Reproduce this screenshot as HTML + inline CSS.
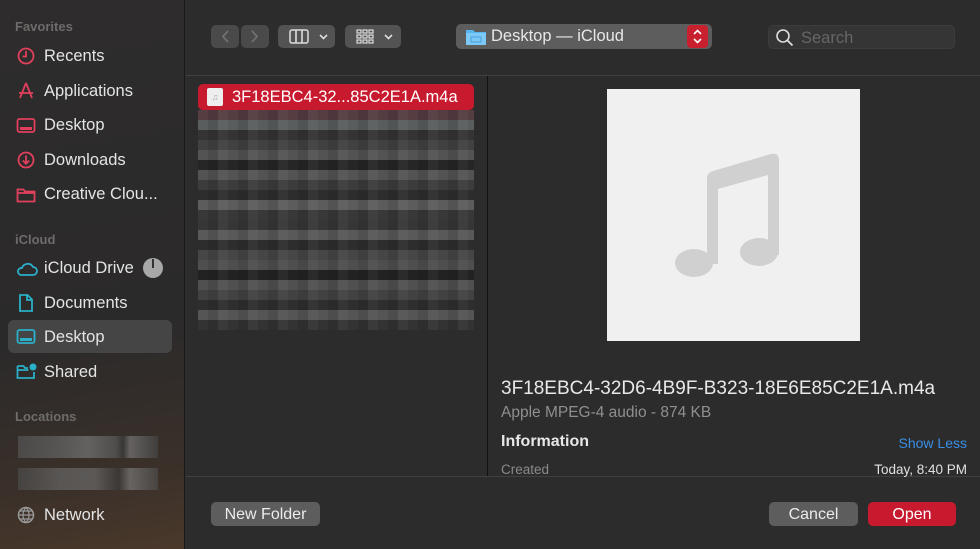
<!DOCTYPE html>
<html><head><style>
*{margin:0;padding:0;box-sizing:border-box}
body{width:980px;height:549px;overflow:hidden;background:#2c2c2c;font-family:"Liberation Sans",sans-serif;position:relative;color:#e0e0e0}
.sb{position:absolute;left:0;top:0;width:185px;height:549px;background:linear-gradient(170deg,#2e2c2c 0%,#2b2a2a 60%,#3a3029 85%,#4a382b 100%);border-right:1px solid #1a1a1a}
.h{position:absolute;left:15px;font-size:13px;color:#6e6c6b;font-weight:bold}
.it{position:absolute;left:44px;font-size:16.5px;color:#e4e4e4}
.ic{position:absolute;left:16px}
.abs{position:absolute}
.btn{position:absolute;background:#535353;border-radius:5px}
</style></head><body>
<div class="sb">
<div class="h" style="top:19px">Favorites</div>
<svg class="ic" style="top:46px" width="20" height="20" viewBox="0 0 20 20"><circle cx="10" cy="10" r="7.5" fill="none" stroke="#e0405c" stroke-width="1.8"/><path d="M10 5v5.5H6.5" fill="none" stroke="#e0405c" stroke-width="1.8"/></svg>
<div class="it" style="top:47px">Recents</div>
<svg class="ic" style="top:81px" width="20" height="20" viewBox="0 0 20 20"><path d="M10 2L4 17M10 2l6 15M3 12h14" fill="none" stroke="#e0405c" stroke-width="1.8"/></svg>
<div class="it" style="top:82px">Applications</div>
<svg class="ic" style="top:116px" width="20" height="20" viewBox="0 0 20 20"><rect x="1.5" y="3" width="17" height="13" rx="2" fill="none" stroke="#e0405c" stroke-width="1.8"/><rect x="4" y="11" width="12" height="3" fill="#e0405c"/></svg>
<div class="it" style="top:116px">Desktop</div>
<svg class="ic" style="top:150px" width="20" height="20" viewBox="0 0 20 20"><circle cx="10" cy="10" r="7.5" fill="none" stroke="#e0405c" stroke-width="1.8"/><path d="M10 5.5v8M6.8 10.5l3.2 3.2 3.2-3.2" fill="none" stroke="#e0405c" stroke-width="1.8"/></svg>
<div class="it" style="top:151px">Downloads</div>
<svg class="ic" style="top:185px" width="20" height="20" viewBox="0 0 20 20"><path d="M1.5 4.5h6l1.5 2h9.5v10h-17z M1.5 8h17" fill="none" stroke="#e0405c" stroke-width="1.8"/></svg>
<div class="it" style="top:185px">Creative Clou...</div>
<div class="h" style="top:232px">iCloud</div>
<svg class="ic" style="top:259px" width="22" height="20" viewBox="0 0 22 20"><path d="M5 16h12a4 4 0 0 0 0-8 6 6 0 0 0-11 1 3.5 3.5 0 0 0-1 7z" fill="none" stroke="#2ab0c8" stroke-width="1.8"/></svg>
<div class="it" style="top:259px">iCloud Drive</div>
<div class="abs" style="left:143px;top:258px;width:20px;height:20px;border-radius:50%;background:#a8a8a8"></div>
<div class="abs" style="left:152px;top:259px;width:1.5px;height:9px;background:#333"></div>
<svg class="ic" style="top:293px" width="20" height="20" viewBox="0 0 20 20"><path d="M4 2h7.5L16 6.5V18H4z M11 2v5h5" fill="none" stroke="#2ab0c8" stroke-width="1.8"/></svg>
<div class="it" style="top:294px">Documents</div>
<div class="abs" style="left:8px;top:320px;width:164px;height:33px;background:#464545;border-radius:6px"></div>
<svg class="ic" style="top:327px" width="20" height="20" viewBox="0 0 20 20"><rect x="1.5" y="3" width="17" height="13" rx="2" fill="none" stroke="#2ab0c8" stroke-width="1.8"/><rect x="4" y="11" width="12" height="3" fill="#2ab0c8"/></svg>
<div class="it" style="top:328px">Desktop</div>
<svg class="ic" style="top:361px" width="22" height="20" viewBox="0 0 22 20"><path d="M1.5 5h6l1.5 2h3M18 11v6H1.5V5M1.5 9h11" fill="none" stroke="#2ab0c8" stroke-width="1.8"/><circle cx="17" cy="6" r="3.5" fill="#2ab0c8"/></svg>
<div class="it" style="top:363px">Shared</div>
<div class="h" style="top:409px">Locations</div>
<div class="abs" style="left:18px;top:436px;width:140px;height:22px;background:linear-gradient(90deg,#555 0,#666 30%,#777 50%,#5a5a5a 70%,#3a3a3a 75%,#777 80%,#444 100%);opacity:.7"></div>
<div class="abs" style="left:18px;top:468px;width:140px;height:22px;background:linear-gradient(90deg,#4a4a4a 0,#666 30%,#6a6a6a 55%,#3a3a3a 72%,#7a7a7a 80%,#4a4a4a 100%);opacity:.7"></div>
<svg class="ic" style="top:505px" width="20" height="20" viewBox="0 0 20 20"><circle cx="10" cy="10" r="7.5" fill="none" stroke="#999" stroke-width="1.5"/><path d="M2.5 10h15M10 2.5c-4 4-4 11 0 15c4-4 4-11 0-15M4 6h12M4 14h12" fill="none" stroke="#999" stroke-width="1.2"/></svg>
<div class="it" style="top:506px">Network</div>
</div>

<div class="btn" style="left:211px;top:25px;width:28px;height:23px;background:#4a4a4a"></div>
<div class="btn" style="left:241px;top:25px;width:28px;height:23px;background:#4a4a4a"></div>
<svg class="abs" style="left:211px;top:25px" width="58" height="23"><path d="M17 6l-5 5.5 5 5.5M41 6l5 5.5-5 5.5" fill="none" stroke="#777" stroke-width="1.5"/></svg>
<div class="btn" style="left:278px;top:25px;width:57px;height:23px"></div>
<svg class="abs" style="left:278px;top:25px" width="57" height="23"><rect x="12" y="5" width="18" height="13" rx="2" fill="none" stroke="#ddd" stroke-width="1.5"/><path d="M18 5v13M24 5v13M42 10l3.5 3.5L49 10" fill="none" stroke="#ddd" stroke-width="1.6"/></svg>
<div class="btn" style="left:345px;top:25px;width:56px;height:23px"></div>
<svg class="abs" style="left:345px;top:25px" width="56" height="23"><g fill="none" stroke="#ddd" stroke-width="1.2"><rect x="12" y="5" width="4" height="3"/><rect x="18" y="5" width="4" height="3"/><rect x="24" y="5" width="4" height="3"/><rect x="12" y="10" width="4" height="3"/><rect x="18" y="10" width="4" height="3"/><rect x="24" y="10" width="4" height="3"/><rect x="12" y="15" width="4" height="3"/><rect x="18" y="15" width="4" height="3"/><rect x="24" y="15" width="4" height="3"/></g><path d="M40 10l3.5 3.5L47 10" fill="none" stroke="#ddd" stroke-width="1.6"/></svg>
<div class="btn" style="left:456px;top:24px;width:256px;height:25px;background:#5d5d5d"></div>
<svg class="abs" style="left:466px;top:28px" width="20" height="17"><path d="M0 2h7l2 2h11v13H0z" fill="#59b5f0"/><rect x="0" y="5" width="20" height="12" fill="#7cc8f7"/><rect x="5" y="9" width="10" height="5" fill="none" stroke="#4aa0dd"/></svg>
<div class="abs" style="left:491px;top:27px;font-size:16.5px;color:#e8e8e8">Desktop — iCloud</div>
<div class="abs" style="left:687px;top:25px;width:21px;height:23px;background:#c8202e;border-radius:4px"></div>
<svg class="abs" style="left:687px;top:25px" width="21" height="23"><path d="M7 9l3.5-3.5L14 9M7 14l3.5 3.5L14 14" fill="none" stroke="#fff" stroke-width="1.6"/></svg>
<div class="abs" style="left:768px;top:25px;width:187px;height:24px;background:#353535;border:1px solid #3c3c3c;border-radius:5px"></div>
<svg class="abs" style="left:775px;top:28px" width="20" height="20"><circle cx="8" cy="8" r="6" fill="none" stroke="#ddd" stroke-width="1.6"/><path d="M12.5 12.5l5 5" stroke="#ddd" stroke-width="1.8"/></svg>
<div class="abs" style="left:801px;top:29px;font-size:16.5px;color:#666">Search</div>

<div class="abs" style="left:186px;top:75px;width:794px;height:1px;background:#404040"></div>
<div class="abs" style="left:487px;top:76px;width:1px;height:400px;background:#111"></div>
<div class="abs" style="left:186px;top:476px;width:794px;height:1px;background:#404040"></div>

<div class="abs" style="left:198px;top:84px;width:276px;height:26px;background:#c81a2e;border-radius:5px"></div>
<div class="abs" style="left:207px;top:88px;width:16px;height:18px;background:#eee;border-radius:2px;font-size:9px;color:#aaa;text-align:center;line-height:18px">♫</div>
<div class="abs" style="left:232px;top:88px;font-size:16.5px;color:#fff">3F18EBC4-32...85C2E1A.m4a</div>
<div class="abs" style="left:198px;top:110px;width:276px;height:220px;background:
repeating-linear-gradient(90deg,rgba(0,0,0,0) 0 10px,rgba(0,0,0,.1) 10px 20px,rgba(255,255,255,.04) 20px 30px),
linear-gradient(180deg,#5a3f45 0 10px,#5f6363 10px 20px,#353535 20px 30px,#444 30px 40px,#585858 40px 50px,#262626 50px 60px,#585858 60px 70px,#3e3e3e 70px 80px,#2e2e2e 80px 90px,#626262 90px 100px,#3a3a3a 100px 110px,#383838 110px 120px,#5e5e5e 120px 130px,#2e2e2e 130px 140px,#494949 140px 150px,#525252 150px 160px,#222 160px 170px,#555 170px 180px,#454545 180px 190px,#2f2f2f 190px 200px,#5a5a5a 200px 210px,#343434 210px 220px);opacity:.9"></div>

<div class="abs" style="left:607px;top:89px;width:253px;height:252px;background:#f0f0f0"></div>
<svg class="abs" style="left:607px;top:89px" width="253" height="252" viewBox="0 0 253 252"><g fill="#d0d0d0"><path d="M100 90c0-4 2-7 6-8l58-17c5-1 8 1 8 6v95h-11V86l-50 14v75h-11z"/><ellipse cx="87" cy="174" rx="19" ry="14"/><ellipse cx="152" cy="163" rx="19" ry="14"/></g></svg>
<div class="abs" style="left:501px;top:378px;font-size:19px;color:#e8e8e8">3F18EBC4-32D6-4B9F-B323-18E6E85C2E1A.m4a</div>
<div class="abs" style="left:501px;top:404px;font-size:15.5px;color:#8f8f8f">Apple MPEG-4 audio - 874 KB</div>
<div class="abs" style="left:501px;top:433px;font-size:16px;color:#e8e8e8;font-weight:bold">Information</div>
<div class="abs" style="right:13px;top:435px;font-size:14px;color:#3a8ee6">Show Less</div>
<div class="abs" style="left:501px;top:462px;font-size:13.5px;color:#8a8a8a">Created</div>
<div class="abs" style="right:13px;top:462px;font-size:13.5px;color:#e0e0e0">Today, 8:40 PM</div>

<div class="btn" style="left:211px;top:502px;width:109px;height:24px;background:#5d5d5d;font-size:16px;color:#ececec;text-align:center;line-height:25px">New Folder</div>
<div class="btn" style="left:769px;top:502px;width:89px;height:24px;background:#5d5d5d;font-size:16px;color:#ececec;text-align:center;line-height:25px">Cancel</div>
<div class="btn" style="left:868px;top:502px;width:88px;height:24px;background:#c81a2e;font-size:16px;color:#fff;text-align:center;line-height:25px">Open</div>
</body></html>
